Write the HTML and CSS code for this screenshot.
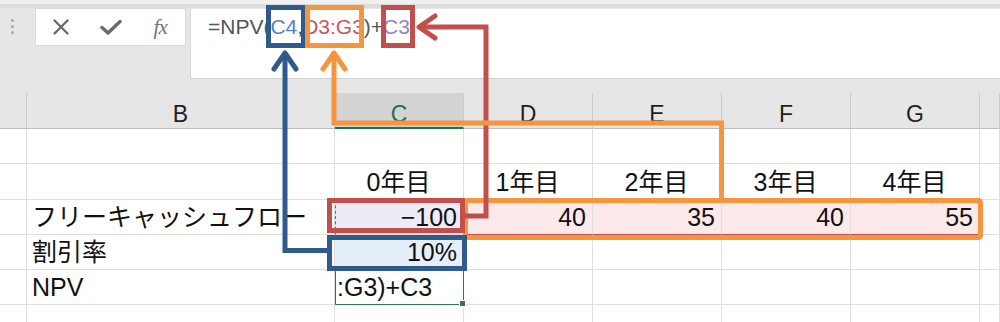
FILE: index.html
```html
<!DOCTYPE html>
<html lang="ja">
<head>
<meta charset="utf-8">
<title>NPV</title>
<link rel="stylesheet" href="styles.css">
</head>
<body>
<div class="app">
  <div class="topbar"></div>
  <div class="formula-row">
    <div class="fx-area">
      <div class="grip"><span></span><span></span><span></span></div>
      <div class="fx-tools">
        <div class="tool">
          <svg width="18" height="18" viewBox="0 0 18 18"><path d="M2.5 2.5 L15.5 15.5 M15.5 2.5 L2.5 15.5" stroke="#6b6b6b" stroke-width="2.4" stroke-linecap="round" fill="none"/></svg>
        </div>
        <div class="tool">
          <svg width="22" height="16" viewBox="0 0 22 16"><path d="M2 8.5 L8 14 L20 2.5" stroke="#6b6b6b" stroke-width="3.4" stroke-linejoin="round" stroke-linecap="round" fill="none"/></svg>
        </div>
        <div class="tool"><span class="fx">fx</span></div>
      </div>
    </div>
    <div class="formula-box"><span class="f-plain">=NPV(</span><span class="f-c4">C4</span><span class="f-plain">,</span><span class="f-d3">D3:G3</span><span class="f-plain">)+</span><span class="f-c3">C3</span></div>
  </div>
  <div class="gap-band"></div>
  <div class="sheet">
    <div class="hd"></div><div class="hd">B</div><div class="hd hd-sel">C</div><div class="hd">D</div><div class="hd">E</div><div class="hd">F</div><div class="hd">G</div><div class="hd"></div>

    <div class="c"></div><div class="c"></div><div class="c"></div><div class="c"></div><div class="c"></div><div class="c"></div><div class="c"></div><div class="c"></div>

    <div class="c"></div><div class="c"></div><div class="c center">0年目</div><div class="c center">1年目</div><div class="c center">2年目</div><div class="c center">3年目</div><div class="c center">4年目</div><div class="c"></div>

    <div class="c"></div><div class="c">フリーキャッシュフロー</div><div class="c num fill-c3">−100</div><div class="c num fill-range">40</div><div class="c num fill-range">35</div><div class="c num fill-range">40</div><div class="c num fill-range">55</div><div class="c"></div>

    <div class="c"></div><div class="c">割引率</div><div class="c num fill-c4">10%</div><div class="c"></div><div class="c"></div><div class="c"></div><div class="c"></div><div class="c"></div>

    <div class="c"></div><div class="c">NPV</div><div class="c active">:G3)+C3</div><div class="c"></div><div class="c"></div><div class="c"></div><div class="c"></div><div class="c"></div>

    <div class="c"></div><div class="c"></div><div class="c"></div><div class="c"></div><div class="c"></div><div class="c"></div><div class="c"></div><div class="c"></div>
  </div>

  <svg class="annot" width="1000" height="322" viewBox="0 0 1000 322">
    <g fill="none" stroke-width="5">
      <rect x="465.5" y="200.5" width="515" height="37" rx="2" stroke="#f5953f"/>
      <g stroke="#c24f4c">
        <rect x="383.5" y="7.5" width="29" height="38"/>
        <path d="M419 27 H486 V216 H463"/>
        <path d="M435 16 L419 27 L435 38" stroke-linecap="round" stroke-linejoin="round"/>
        <rect x="329.5" y="200.5" width="133" height="30"/>
      </g>
      <g stroke="#2e5a8c">
        <rect x="268.5" y="7.5" width="35" height="38"/>
        <path d="M285 53 V250.5 H330"/>
        <path d="M274 69 L285 53 L296 69" stroke-linecap="round" stroke-linejoin="round"/>
        <rect x="329.5" y="237.5" width="135" height="31"/>
      </g>
      <g stroke="#f5953f">
        <rect x="307.5" y="7.5" width="54" height="38"/>
        <path d="M334 53 V123 H721.5 V199"/>
        <path d="M323 69 L334 53 L345 69" stroke-linecap="round" stroke-linejoin="round"/>
      </g>
    </g>
  </svg>
</div>
</body>
</html>
```

FILE: styles.css
```css
html, body {
  margin: 0;
  padding: 0;
  background: #ffffff;
}

.app {
  position: relative;
  width: 1000px;
  height: 322px;
  overflow: hidden;
  background: #e6e6e6;
  font-family: "Liberation Sans", "Noto Sans CJK JP", sans-serif;
}

.topbar {
  height: 4px;
  background: #efefef;
  border-bottom: 4px solid #dcdcdc;
}

.formula-row {
  display: flex;
  height: 71px;
}

.fx-area {
  width: 190px;
  display: flex;
  align-items: flex-start;
  padding-left: 11px;
  box-sizing: border-box;
}

.grip {
  display: flex;
  flex-direction: column;
  gap: 3px;
  margin-top: 11px;
}

.grip span {
  width: 3px;
  height: 3px;
  border-radius: 50%;
  background: #a9a9a9;
}

.fx-tools {
  margin-left: 21px;
  width: 151px;
  height: 38px;
  box-sizing: border-box;
  background: #ffffff;
  border: 1px solid #dadada;
  display: flex;
}

.tool {
  width: 50px;
  display: flex;
  align-items: center;
  justify-content: center;
}

.fx {
  font-family: "Liberation Serif", serif;
  font-style: italic;
  font-size: 21px;
  color: #737373;
  letter-spacing: -1px;
}

.formula-box {
  flex: 1;
  margin-top: 1px;
  height: 70px;
  box-sizing: border-box;
  background: #ffffff;
  border-left: 1px solid #d6d6d6;
  border-bottom: 1px solid #d2d2d2;
  padding: 6px 0 0 17px;
  font-size: 21px;
  line-height: 24px;
  color: #555555;
  white-space: nowrap;
}

.f-c4 { color: #5a80c2; }
.f-d3 { color: #c5585a; }
.f-c3 { color: #9683c8; }

.gap-band {
  height: 14px;
  background: #e6e6e6;
}

.sheet {
  display: grid;
  grid-template-columns: 27px 308px repeat(5, 129px) 20px;
  grid-template-rows: 36px 35px 36px 35px 35px 35px 18px;
  background: #ffffff;
}

.hd {
  background: #e6e6e6;
  border-right: 1px solid #cbcbcb;
  border-bottom: 1px solid #bcbcbc;
  box-sizing: border-box;
  display: flex;
  justify-content: center;
  align-items: flex-start;
  padding-top: 8px;
  font-size: 23px;
  line-height: 26px;
  color: #1e1e1e;
}

.hd-sel {
  background: #d3d3d3;
  color: #217346;
  border-bottom: 2px solid #217346;
}

.c {
  border-right: 1px solid #dedede;
  border-bottom: 1px solid #dedede;
  box-sizing: border-box;
  display: flex;
  align-items: center;
  padding: 0 6px 0 5px;
  font-size: 25px;
  line-height: 28px;
  color: #111111;
  white-space: nowrap;
  overflow: visible;
}

.center {
  justify-content: center;
}

.num {
  justify-content: flex-end;
}

.fill-c3 {
  background: #efebf6;
  border-left: 1px dashed #6a6a6a;
}

.fill-c4 {
  background: #e6eef9;
}

.fill-range {
  background: #fce9e9;
  border-bottom: 1px solid #c24f4c;
}

.active {
  position: relative;
  padding-left: 2px;
  outline: 1.5px solid #2c7a4b;
  outline-offset: -1px;
}

.active::after {
  content: "";
  position: absolute;
  right: -3px;
  bottom: -3px;
  width: 5px;
  height: 5px;
  background: #2c7a4b;
  border: 1px solid #ffffff;
}

.annot {
  position: absolute;
  left: 0;
  top: 0;
  pointer-events: none;
}
```
